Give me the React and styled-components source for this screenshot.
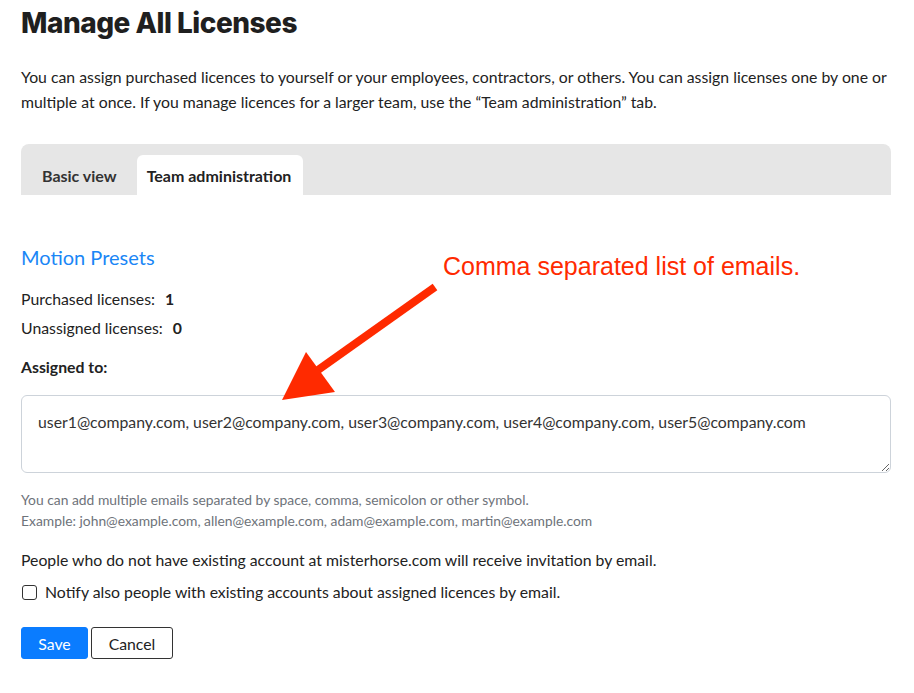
import React from "react";
import styled, { createGlobalStyle } from "styled-components";

const Global = createGlobalStyle`
  body {
    margin: 0;
    background: #fff;
    font-family: Lato, "Open Sans", sans-serif;
    color: #222;
  }
`;

const Page = styled.main`
  position: relative;
  padding: 0 23px 0 21px;
  > h1 {
    font-family: Inter, "Liberation Sans", sans-serif;
    font-size: 28px;
    font-weight: 800;
    letter-spacing: -0.5px;
    line-height: 34px;
    margin: 6px 0 0;
    color: #1f1f1f;
  }
`;

const Intro = styled.p`
  font-size: 15.8px;
  line-height: 25px;
  margin: 24px 0 0;
  color: #222;
`;

const TabBar = styled.nav`
  display: flex;
  align-items: flex-end;
  height: 51px;
  margin-top: 30px;
  padding-left: 10px;
  background: #e6e6e6;
  border-radius: 8px 8px 0 0;
`;

const Tab = styled.div`
  height: 40px;
  display: flex;
  align-items: center;
  padding: 0 ${(p) => (p.$active ? "12px 0 10px" : "11px")};
  font-size: 16px;
  font-weight: 700;
  color: ${(p) => (p.$active ? "#222" : "#333")};
  background: ${(p) => (p.$active ? "#fff" : "transparent")};
  border-radius: 6px 6px 0 0;
  margin-right: ${(p) => (p.$active ? "0" : "9px")};
`;

const SectionTitle = styled.h2`
  font-size: 20px;
  font-weight: 400;
  color: #1a86f6;
  margin: 50px 0 0;
  line-height: 24px;
`;

const Stats = styled.dl`
  margin: 15px 0 0;
  font-size: 15.8px;
  > div {
    display: flex;
    gap: 10px;
    line-height: 29px;
  }
  dt, dd { margin: 0; }
  dd { font-weight: 700; }
`;

const Label = styled.label`
  display: block;
  font-size: 15.8px;
  font-weight: 700;
  margin-top: 15px;
  line-height: 20px;
`;

const EmailArea = styled.textarea`
  display: block;
  box-sizing: border-box;
  width: 100%;
  height: 78px;
  margin-top: 18px;
  padding: 15px 16px;
  border: 1px solid #cdd3da;
  border-radius: 6px;
  font-family: Lato, "Open Sans", sans-serif;
  font-size: 15.8px;
  line-height: 22px;
  color: #333;
  resize: vertical;
  outline: none;
`;

const Hint = styled.p`
  font-size: 13.85px;
  line-height: 21px;
  color: #6e737a;
  margin: 16px 0 0;
`;

const Notice = styled.p`
  font-size: 15.8px;
  line-height: 22px;
  margin: 18px 0 0;
`;

const CheckRow = styled.label`
  display: flex;
  align-items: center;
  gap: 8px;
  font-size: 15.8px;
  margin-top: 10px;
  line-height: 22px;
`;

const Box = styled.span`
  width: 13px;
  height: 13px;
  border: 1px solid #333;
  border-radius: 3px;
  margin-left: 1px;
`;

const Actions = styled.div`
  display: flex;
  gap: 3px;
  margin-top: 24px;
`;

const Button = styled.button`
  height: 32px;
  padding: 0 16px;
  font-family: Lato, "Open Sans", sans-serif;
  font-size: 15.8px;
  border-radius: 3px;
  cursor: pointer;
  border: 1px solid ${(p) => (p.$primary ? "#0a7cff" : "#333")};
  background: ${(p) => (p.$primary ? "#0a7cff" : "#fff")};
  color: ${(p) => (p.$primary ? "#fff" : "#222")};
  width: ${(p) => (p.$primary ? "67px" : "82px")};
`;

const Note = styled.div`
  position: absolute;
  left: 443px;
  top: 246px;
  font-family: "Liberation Sans", Arial, sans-serif;
  font-size: 25px;
  color: #ff2a00;
  white-space: nowrap;
`;

const Arrow = styled.svg`
  position: absolute;
  left: 0;
  top: 0;
  pointer-events: none;
`;

export default function App() {
  return (
    <>
      <Global />
      <Page>
        <h1>Manage All Licenses</h1>
        <Intro>
          You can assign purchased licences to yourself or your employees, contractors, or others. You can assign licenses one by one or multiple at once. If you manage licences for a larger team, use the “Team administration” tab.
        </Intro>
        <TabBar>
          <Tab>Basic view</Tab>
          <Tab $active>Team administration</Tab>
        </TabBar>
        <SectionTitle>Motion Presets</SectionTitle>
        <Stats>
          <div>
            <dt>Purchased licenses:</dt>
            <dd>1</dd>
          </div>
          <div>
            <dt>Unassigned licenses:</dt>
            <dd>0</dd>
          </div>
        </Stats>
        <Label htmlFor="emails">Assigned to:</Label>
        <EmailArea
          id="emails"
          defaultValue="user1@company.com, user2@company.com, user3@company.com, user4@company.com, user5@company.com"
        />
        <Hint>
          You can add multiple emails separated by space, comma, semicolon or other symbol.
          <br />
          Example: john@example.com, allen@example.com, adam@example.com, martin@example.com
        </Hint>
        <Notice>People who do not have existing account at misterhorse.com will receive invitation by email.</Notice>
        <CheckRow>
          <Box />
          Notify also people with existing accounts about assigned licences by email.
        </CheckRow>
        <Actions>
          <Button $primary>Save</Button>
          <Button>Cancel</Button>
        </Actions>
        <Note>Comma separated list of emails.</Note>
        <Arrow width="914" height="693">
          <line x1="435" y1="281" x2="318" y2="364" stroke="#ff2a00" strokeWidth="8" />
          <polygon points="282,394 306,346 335,386" fill="#ff2a00" />
        </Arrow>
      </Page>
    </>
  );
}
